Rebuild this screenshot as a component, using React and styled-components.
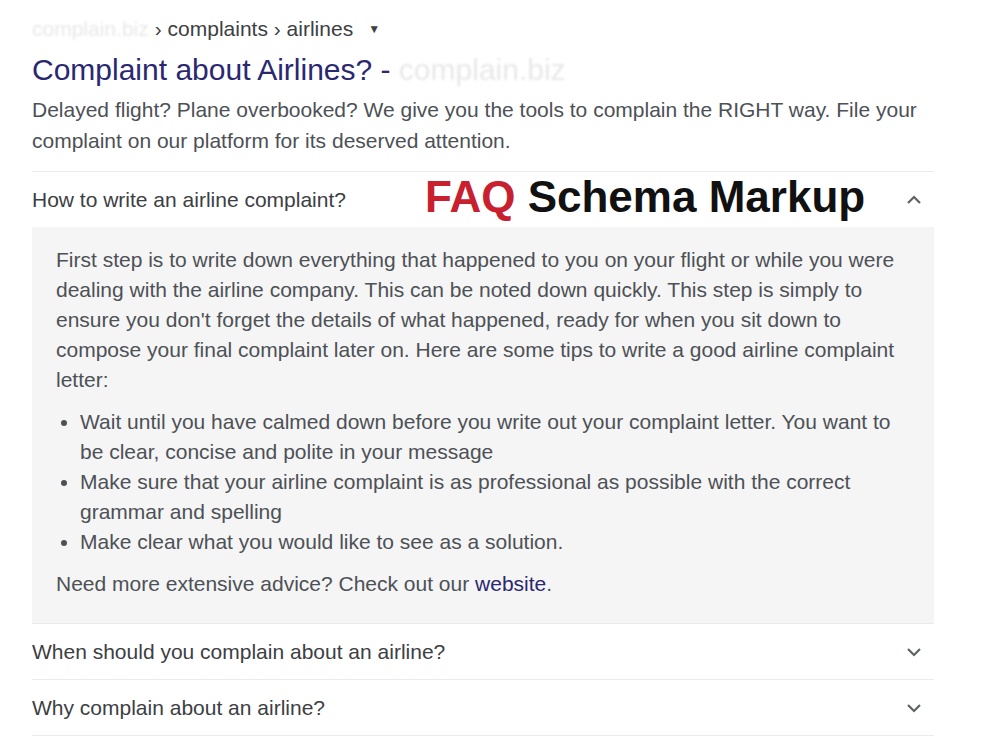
import styled, { createGlobalStyle } from 'styled-components';

const GlobalStyle = createGlobalStyle`
  html, body {
    margin: 0;
    padding: 0;
    background: #ffffff;
  }
  body {
    font-family: "Liberation Sans", Arial, sans-serif;
  }
`;

const faqs = [
  { question: 'How to write an airline complaint?', open: true },
  { question: 'When should you complain about an airline?', open: false },
  { question: 'Why complain about an airline?', open: false },
];

function Chevron({ up }) {
  return (
    <ChevronIcon viewBox="0 0 16 10" width="16" height="10">
      <polyline
        points={up ? '2,8 8,2 14,8' : '2,2 8,8 14,2'}
        fill="none"
        stroke="#5f6368"
        strokeWidth="2.2"
      />
    </ChevronIcon>
  );
}

export default function App() {
  return (
    <>
      <GlobalStyle />
      <Result>
        <Breadcrumb>
          <Faded>complain.biz</Faded>
          <Crumb>› complaints › airlines</Crumb>
          <DropArrow>▼</DropArrow>
        </Breadcrumb>

        <Title>
          Complaint about Airlines? - <Faded>complain.biz</Faded>
        </Title>

        <Snippet>
          Delayed flight? Plane overbooked? We give you the tools to complain the RIGHT way. File your
          complaint on our platform for its deserved attention.
        </Snippet>

        <FaqList>
          {faqs.map((faq, i) => (
            <FaqItem key={faq.question}>
              <FaqHeader>
                <Question>{faq.question}</Question>
                {i === 0 && (
                  <Stamp>
                    <StampAccent>FAQ</StampAccent> Schema Markup
                  </Stamp>
                )}
                <Chevron up={faq.open} />
              </FaqHeader>
              {faq.open && (
                <Answer>
                  <AnswerText>
                    First step is to write down everything that happened to you on your flight or while you were
                    dealing with the airline company. This can be noted down quickly. This step is simply to
                    ensure you don't forget the details of what happened, ready for when you sit down to
                    compose your final complaint later on. Here are some tips to write a good airline complaint
                    letter:
                  </AnswerText>
                  <Tips>
                    <li>
                      Wait until you have calmed down before you write out your complaint letter. You want to
                      be clear, concise and polite in your message
                    </li>
                    <li>
                      Make sure that your airline complaint is as professional as possible with the correct
                      grammar and spelling
                    </li>
                    <li>Make clear what you would like to see as a solution.</li>
                  </Tips>
                  <AnswerText>
                    Need more extensive advice? Check out our <Link href="#">website</Link>.
                  </AnswerText>
                </Answer>
              )}
            </FaqItem>
          ))}
        </FaqList>
      </Result>
    </>
  );
}

const Result = styled.div`
  width: 902px;
  padding: 14px 0 0 32px;
  font-family: "Liberation Sans", Arial, sans-serif;
`;

const Breadcrumb = styled.div`
  display: flex;
  align-items: center;
  gap: 6px;
  height: 30px;
  font-size: 21px;
  color: #202124;
`;

const Faded = styled.span`
  color: #e8e8e8;
  filter: blur(1px);
`;

const Crumb = styled.span`
  color: #3c4043;
`;

const DropArrow = styled.span`
  font-size: 12px;
  margin-left: 9px;
  color: #3c4043;
`;

const Title = styled.h3`
  margin: 8px 0 0;
  font-size: 30px;
  font-weight: 400;
  line-height: 36px;
  color: #2a2870;
`;

const Snippet = styled.p`
  margin: 6px 0 0;
  font-size: 21px;
  line-height: 31px;
  color: #4d5156;
`;

const FaqList = styled.div`
  margin-top: 15px;
  border-bottom: 1px solid #ebebeb;
`;

const FaqItem = styled.div`
  border-top: 1px solid #ebebeb;
`;

const FaqHeader = styled.div`
  position: relative;
  display: flex;
  align-items: center;
  justify-content: space-between;
  height: 55px;
  padding-right: 12px;
`;

const Question = styled.span`
  font-size: 21px;
  color: #3c4043;
`;

const Stamp = styled.span`
  position: absolute;
  left: 393px;
  top: 0;
  font-size: 44px;
  font-weight: 700;
  color: #111111;
`;

const StampAccent = styled.span`
  color: #c8202f;
`;

const ChevronIcon = styled.svg`
  display: block;
`;

const Answer = styled.div`
  background: #f5f5f5;
  padding: 18px 24px 24px;
  font-size: 21px;
  line-height: 30px;
  color: #4d5156;
`;

const AnswerText = styled.p`
  margin: 0;
`;

const Tips = styled.ul`
  margin: 12px 0;
  padding-left: 24px;
`;

const Link = styled.a`
  color: #2a2870;
  text-decoration: none;
`;
